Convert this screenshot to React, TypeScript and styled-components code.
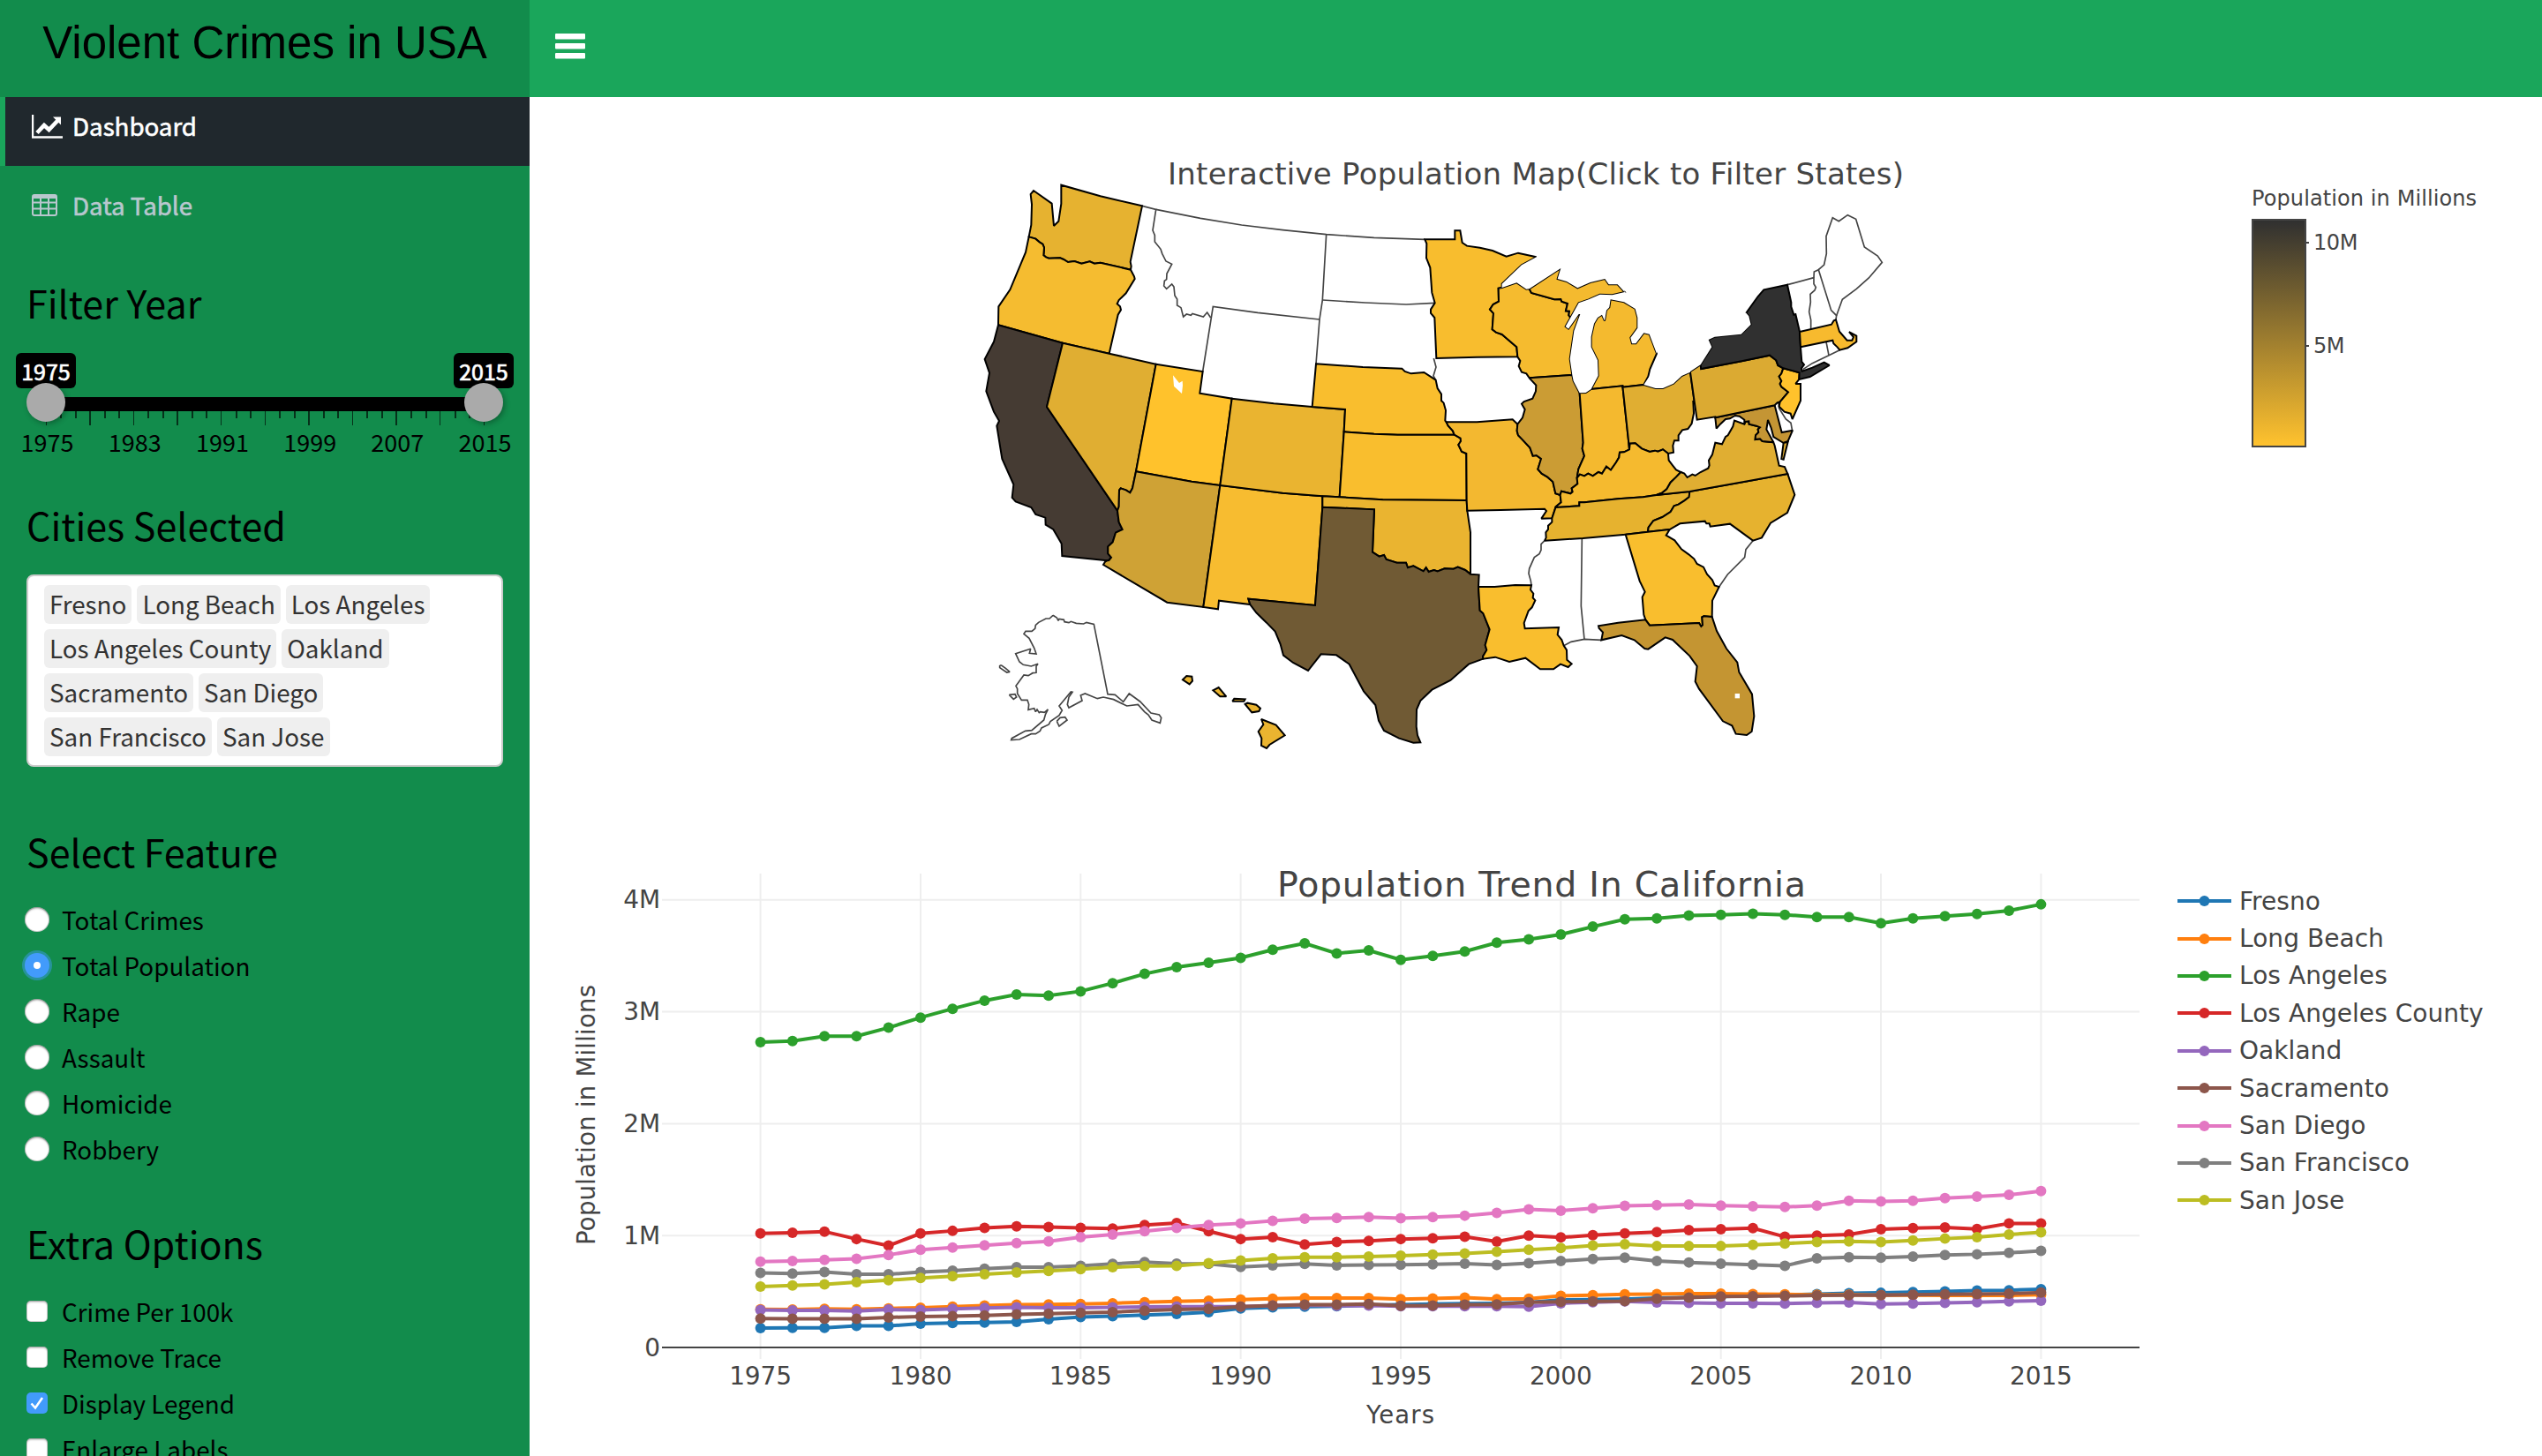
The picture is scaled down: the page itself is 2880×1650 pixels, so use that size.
import React from 'react';
import styled, { createGlobalStyle, css } from 'styled-components';

const sans = `"Noto Sans CJK SC", "Noto Sans", sans-serif`;
const chartFont = `Verdana, "DejaVu Sans", sans-serif`;

const GlobalStyle = createGlobalStyle`
  * { box-sizing: border-box; }
  html, body { margin: 0; padding: 0; height: 1650px; overflow: hidden; background: #fff; }
  h1, h2, ul { margin: 0; padding: 0; font-weight: 400; list-style: none; }
`;

/* ---------- layout ---------- */
const Page = styled.div`
  display: grid;
  grid-template-columns: 600px 1fr;
  grid-template-rows: 110px 1540px;
  width: 2880px;
  height: 1650px;
  overflow: hidden;
  font-family: ${sans};
  color: #000;
`;
const Brand = styled.h1`
  background: #128c4c;
  font-family: "Liberation Sans", Arial, sans-serif;
  font-size: 51px;
  line-height: 97px;
  text-align: center;
  white-space: nowrap;
`;
const TopBar = styled.header`
  background: #1aa65b;
  padding: 33px 26px;
  color: #fff;
`;
const Sidebar = styled.aside`
  background: #128c4c;
  overflow: hidden;
`;
const Main = styled.main`
  display: grid;
  grid-template-rows: 850px 690px;
  background: #fff;
`;
const Panel = styled.section`
  display: grid;
  grid-template-columns: 1840px 1fr;
`;

/* ---------- navigation ---------- */
const Nav = styled.ul`
  display: grid;
  gap: 12px;
`;
const NavItem = styled.li<{ $active?: boolean }>`
  display: flex;
  align-items: flex-start;
  height: 78px;
  padding: 15px 0 0 30px;
  border-left: 6px solid ${p => (p.$active ? '#1aa65b' : 'transparent')};
  background: ${p => (p.$active ? '#20282d' : 'transparent')};
  color: ${p => (p.$active ? '#fff' : '#b8c7ce')};
  font-size: 27.7px;
  line-height: 34px;
  -webkit-text-stroke: 0.6px currentColor;
  svg { width: 36px; height: 28px; margin: 5px 10px 0 0; -webkit-text-stroke: 0; }
`;

/* ---------- sidebar form ---------- */
const Group = styled.section<{ $height: number }>`
  height: ${p => p.$height}px;
`;
const FilterBlock = styled(Group)`
  padding-top: 34px;
`;
const Heading = styled.h2`
  padding-left: 30px;
  font-size: 43px;
  line-height: 60px;
  height: 60px;
`;
const Slider = styled.div`
  position: relative;
  height: 130px;
  margin-top: 28px;
`;
const Track = styled.div`
  position: absolute;
  left: 52px;
  top: 50px;
  width: 496px;
  height: 16px;
  background: #000;
`;
const Bubble = styled.div<{ $x: number }>`
  position: absolute;
  left: ${p => p.$x - 34}px;
  width: 68px;
  height: 40px;
  border-radius: 6px;
  background: #000;
  color: #fff;
  font-size: 25px;
  line-height: 40px;
  text-align: center;
  -webkit-text-stroke: 0.7px #fff;
`;
const Handle = styled.div<{ $x: number }>`
  position: absolute;
  left: ${p => p.$x - 22}px;
  top: 34px;
  width: 44px;
  height: 44px;
  border-radius: 50%;
  background: #aaa;
  box-shadow: 2px 2px 6px rgba(0, 0, 0, 0.3);
`;
const Tick = styled.i<{ $x: number; $major: boolean }>`
  position: absolute;
  left: ${p => p.$x}px;
  top: 66px;
  width: ${p => (p.$major ? 1.4 : 2)}px;
  height: ${p => (p.$major ? 16 : 8)}px;
  background: rgba(0, 0, 0, 0.65);
`;
const TickLabels = styled.div`
  position: absolute;
  left: 4px;
  top: 81px;
  display: grid;
  grid-template-columns: repeat(6, 99.2px);
  font-size: 27px;
  line-height: 40px;
  text-align: center;
`;
const Picker = styled.ul`
  display: flex;
  flex-wrap: wrap;
  align-content: flex-start;
  gap: 6px;
  width: 540px;
  height: 218px;
  margin: 27px 0 0 30px;
  padding: 10px 70px 0 18px;
  border: 2px solid #ccc;
  border-radius: 8px;
  background: #fff;
`;
const Chip = styled.li`
  height: 44px;
  padding: 0 6px;
  border-radius: 6px;
  background: #efefef;
  color: #333;
  font-size: 27.8px;
  line-height: 43px;
  white-space: nowrap;
`;
const Options = styled.div`
  padding: 22px 0 0 28px;
`;
const Option = styled.label`
  display: flex;
  align-items: center;
  gap: 14px;
  height: 52px;
  font-size: 27.8px;
  line-height: 52px;
`;
const mark = css`
  display: grid;
  place-items: center;
  flex: none;
`;
const Radio = styled.span<{ $on?: boolean }>`
  ${mark}
  width: 28px;
  height: 28px;
  border-radius: 50%;
  background: ${p => (p.$on ? '#429bfb' : '#fff')};
  box-shadow: ${p => (p.$on ? '0 0 0 3px rgba(66,155,251,.45)' : 'inset 0 2px 2px rgba(0,0,0,.22), inset 0 0 0 1px rgba(0,0,0,.2)')};
  &::after {
    content: '';
    width: 8px;
    height: 8px;
    border-radius: 50%;
    background: #fff;
  }
`;
const Check = styled.span<{ $on?: boolean }>`
  ${mark}
  width: 24px;
  height: 24px;
  margin: 0 2px;
  border-radius: 5px;
  background: ${p => (p.$on ? '#429bfb' : '#fff')};
  box-shadow: ${p => (p.$on ? 'none' : 'inset 0 2px 2px rgba(0,0,0,.2), inset 0 0 0 1px rgba(0,0,0,.18)')};
`;

/* ---------- charts ---------- */
const Chart = styled.svg`
  display: block;
  font-family: ${chartFont};
  fill: #444;
`;
const ColorScale = styled.div`
  padding: 101px 0 0 111px;
  font-family: ${chartFont};
  color: #444;
`;
const ScaleTitle = styled.div`
  font-size: 24px;
  letter-spacing: 0.1px;
  line-height: 28px;
  height: 37px;
  white-space: nowrap;
`;
const ScaleBody = styled.div`
  display: flex;
`;
const Ramp = styled.div`
  width: 62px;
  height: 259px;
  border: 2px solid #444;
  background: linear-gradient(#303030, #ffc22e);
`;
const ScaleTicks = styled.div`
  display: grid;
  grid-auto-rows: 117px;
  padding-top: 13px;
`;
const ScaleTick = styled.div`
  display: flex;
  align-items: center;
  gap: 5px;
  height: 28px;
  font-size: 24px;
  letter-spacing: -0.4px;
  &::before { content: ''; width: 3px; height: 2px; background: #444; }
`;
const Legend = styled.ul`
  padding: 40px 0 0 27px;
  font-family: ${chartFont};
  color: #444;
`;
const LegendItem = styled.li`
  display: flex;
  align-items: center;
  gap: 9px;
  height: 42.4px;
  font-size: 28px;
  letter-spacing: 0.05px;
  white-space: nowrap;
`;

/* ---------- map topology ----------
   Borders are stored once as arcs on a sheet grid; each letter switches the
   sheet the following points are measured on. */
const sheets: Record<string, [number, number]> = {
  A: [0, 0], B: [0, 870], C: [1200, 0], D: [1200, 870], E: [2220, 60], F: [2340, 840],
};
type Pt = [number, number];
function trace(src: string): Pt[] {
  let o: [number, number] = [0, 0];
  const out: Pt[] = [];
  src.trim().split(/\s+/).forEach(t => {
    if (sheets[t]) { o = sheets[t]; return; }
    const [x, y] = t.split(',').map(Number);
    out.push([x + o[0], y + o[1]]);
  });
  return out;
}
const arcs: Record<string, string> = {
  waN: 'A 197,325 205,285 207,215 203,180 213,168 275,212 282,288 298,272 307,213 307,149 440,187 582,220',
  waE: 'A 582,220 542,410 545,425 543,437',
  orwa: 'A 197,325 220,332 233,343 244,350 249,362 247,388 255,394 265,398 303,397 315,402 330,411 352,408 376,416 404,409 420,416 440,413 543,437',
  orW: 'A 197,325 186,378 133,505 94,562 93,625',
  caor: 'A 93,625 312,686',
  nvor: 'A 312,686 470,722',
  orE: 'A 470,722 500,590 510,573 507,562 497,553 503,540 527,517 557,468 555,460 543,437',
  caW: 'A 93,625 78,682 47,741 63,788 52,850 78,920 96,951 88,968 B 106,210 145,297 140,342 152,355 205,375 220,399 253,410 254,434 280,450 308,498 310,540 463,556',
  caaz: 'B 463,556 469,555 477,545 466,532 466,508 482,493 492,461 515,450 503,425 498,386',
  canv: 'B 498,386 258,33 A 312,686',
  nvid: 'A 470,722 629,758', utid: 'A 629,758 788,783', utwy: 'A 788,783 778,857 887,875',
  nvut: 'A 629,758 B 561,253',
  nvaz: 'B 561,253 549,310 541,325 527,316 509,310 504,317 503,372 498,386',
  azut: 'B 561,253 750,287 847,300', utco: 'A 887,875 B 847,300', aznm: 'B 847,300 790,714',
  azS: 'B 790,714 667,698 450,570 456,560 463,556',
  nmco: 'B 847,300 1060,326 1195,337', nmok: 'B 1195,337 1195,374', okco: 'B 1195,337 1253,340',
  coks: 'B 1253,340 1268,118', cone: 'B 1268,118 A 1272,912 1160,903', cowy: 'A 887,875 1030,892 1160,903',
  wyne: 'A 1160,903 1173,757',
  nmtx: 'B 1195,374 1170,708 943,686 949,705', nmS: 'B 949,705 843,692 840,721 790,714',
  txok: 'B 1195,374 1371,382 1365,527 1388,542 1404,537 1412,552 1448,563 1479,563 1485,580 D 304,574 338,592 347,580 356,594 374,588 386,592 410,583 440,584 455,578 480,588 498,602',
  txar: 'D 498,602 527,604 525,645', arla: 'D 525,645 580,645 650,639 705,640',
  txla: 'D 525,645 530,725 541,735 563,790 548,843 553,860 540,882 541,890',
  txS: 'D 541,890 492,908 430,963 367,995 328,1032 315,1062 314,1120 318,1150 328,1174 304,1175 255,1160 204,1134 186,1100 175,1047 135,1000 112,957 86,908 42,877 B 1190,874 1146,930 1095,903 1062,878 1052,840 1034,797 1005,767 970,733 949,705',
  neks: 'B 1268,118 C 170,995 250,998 443,998',
  ksmo: 'D 443,128 464,140 465,150 457,162 468,185 484,192 485,351',
  okks: 'B 1253,340 D 200,349 485,351', okmo: 'D 485,351 487,386', moar: 'D 487,386 600,384 750,380 756,387 739,413 775,412',
  okar: 'D 487,386 498,460 498,602', motn: 'D 775,412 788,373',
  artn: 'D 775,412 775,425 762,437 762,450 754,460 755,478 750,488',
  arms: 'D 750,488 738,500 738,520 732,533 715,545 698,583 696,600 703,625 705,640',
  msla: 'D 705,640 702,655 712,668 710,682 718,691 707,715 695,727 680,768 683,787 798,783 794,808 808,825 815,845',
  laS: 'D 815,845 825,860 826,893 842,907 830,918 804,908 780,925 735,925 685,887 630,900 582,884 541,890',
  neN: 'A 1173,757 C 132,768 265,773 275,783 296,790 340,786 365,802 380,812',
  neia: 'C 380,812 386,840 399,860 399,882 407,890 414,915 412,950 416,955',
  iamo: 'C 416,955 520,955 641,946 658,962', nemo: 'C 416,955 422,967 438,985 443,998',
  sdia: 'C 380,812 372,798 381,768 373,738', iamn: 'C 382,738 520,734 658,733',
  wiia: 'C 658,733 667,747 662,765 672,785 688,790 698,805',
  iail: 'C 698,805 721,830 720,850 709,875 680,885 672,893 683,912 675,940 658,962',
  moil: 'D 658,92 656,115 660,130 675,145 700,172 710,200 722,198 738,210 727,245 740,260 760,272 778,288 787,328 803,333',
  moky: 'D 803,333 806,358 788,373',
  kytn: 'D 788,375 868,370 868,358 885,358 1000,346 1085,340 1130,333',
  ilky: 'D 803,333 807,320 838,328 845,322 842,310 862,295 860,275',
  ilin: 'D 860,275 865,245 885,200 878,175 881,155 C 869,856',
  inky: 'D 860,275 870,263 885,268 898,260 914,268 933,255 945,260 960,236 975,248 993,222 1003,205 1005,188 1020,187 1038,178',
  inoh: 'D 1038,178 1036,157 C 1015,832',
  ohky: 'D 1038,178 1040,158 1058,157 1080,175 1107,186 1125,182 1135,185 1152,178 1170,192',
  kywv: 'D 1170,192 1172,215 1185,232 1197,247 1213,255',
  kyva: 'D 1213,255 1197,272 1178,290 1165,313 1150,325 1130,333',
  ohwv: 'D 1170,192 1188,188 1186,165 1191,148 1205,148 1205,130 1218,112 1237,108 1250,90 1257,55 1255,15 1259,15',
  ohpa: 'C 1259,885 1245,785', pawv: 'C 1259,885 1268,947 1330,937',
  paS: 'F 190,100 392,58', pade: 'E 512,838 520,830',
  panj: 'E 520,830 530,826 558,793 535,775 530,765 535,755 527,740 535,730 541,712',
  pany: 'E 541,712 523,702 517,685 495,668 400,688 262,714 260,700', paN: 'E 260,700 225,723',
  nyW: 'E 260,700 298,640 287,615 308,605 398,596 431,563 424,535 415,524',
  nyN: 'E 415,524 455,468 475,445 555,428',
  nyvt: 'E 555,428 568,488 568,503 577,530 583,528 597,588', nyma: 'E 597,588 600,640',
  nyS: 'E 600,640 604,690 612,700 603,712 605,722 640,710 680,692 698,702 632,741 595,750 596,727',
  nynj: 'E 596,727 541,712',
  njE: 'E 596,727 595,750 583,765 600,765 600,822 572,885 566,866 545,860 527,842 530,826',
  mdde: 'F 392,58 416,150 453,143',
  mdE: 'F 453,143 437,180 422,186 388,165 380,135 369,108 364,140 388,184',
  mdva: 'F 388,184 350,180 342,172 326,174 327,160 337,150 335,140 342,133 330,128 305,122 304,112 292,114 289,122',
  mdwv: 'F 289,122 289,107 272,95 257,93 240,103 225,105 207,122 194,137 190,100',
  vawv: 'F 73,285 85,290 95,303 112,293 122,297 140,285 166,272 170,262 168,245 180,225 190,185 213,190 225,165 233,160 250,130 255,110 289,122',
  vaE: 'F 388,184 392,195 407,263 426,267 436,291',
  vatn: 'D 1130,333 1243,321', vanc: 'D 1243,321 F 300,316 436,291',
  tnnc: 'D 1243,321 1241,340 1225,352 1205,365 1190,370 1178,390 1150,408 1120,420 1103,443 1101,458',
  tnms: 'D 750,488 880,480', tnal: 'D 880,480 1025,467', tnga: 'D 1025,467 1101,458', ncga: 'D 1101,458 1175,450',
  gasc: 'D 1175,450 1163,470 1192,487 1215,517 1240,535 1258,550 1268,567 1290,578 1302,602 1320,622 1328,640 1343,645',
  ncsc: 'D 1175,450 1210,430 1295,422 1300,430 1310,430 1313,440 1380,431 1458,488',
  ncE: 'F 436,291 460,362 435,423 378,458 348,508 318,518',
  gaE: 'D 1343,645 1320,692 1319,747',
  gafl: 'D 1319,747 1291,745 1285,748 1287,775 1282,780 1275,768 1107,776 1093,757',
  gaal: 'D 1025,467 1073,625 1091,662 1082,680 1087,740 1093,757',
  alfl: 'D 1093,757 1000,767 933,778 935,786 948,800 943,826',
  flS: 'D 943,826 1012,810 1055,826 1090,855 1102,857 1160,817 1185,825 1243,880 1268,915 1262,967 1275,992 1356,1102 1387,1117 1400,1145 1437,1149 1454,1137 1462,1085 1455,1010 1411,935 1405,902 1368,855 1335,795 1319,747',
  scE: 'D 1458,488 1434,518 1430,545 1372,603 1343,645',
  msal: 'D 877,483 874,710 885,823', msS: 'D 815,845 840,832 885,823 943,826',
  ohN: 'C 1087,828 1127,840 1152,840 1188,824 1216,798 1245,785',
  ohmi: 'C 1015,836 1087,828', inmi: 'C 908,843 1015,832', inN: 'C 869,856 890,855 908,843',
  ilE: 'C 869,856 848,815 844,795', ilwi: 'C 698,805 844,795',
  wiE: 'C 844,795 836,740 850,645 871,588 866,588 831,638 821,630 838,600',
  wimi: 'C 838,600 832,592 834,578 822,577 828,552 808,545 805,537 783,538 705,516 698,502',
  wiN: 'C 593,500 605,498 655,481 688,503 698,502',
  mnwi: 'C 593,500 594,545 575,555 564,572 576,585 572,640 585,650 605,657 620,670 655,700 658,733',
  mnE: 'C 593,500 605,497 605,485 672,421 722,394',
  mnN: 'C 722,394 660,380 620,392 573,372 530,362 486,356 470,345 463,304 445,304 445,334 343,334',
  mnW: 'C 343,334 349,348 348,397 361,430 367,515 377,550 363,572 363,585 376,600 382,738',
  upN: 'C 698,502 805,432 794,468 825,477 862,499 905,480 955,468 968,487 998,487 1022,513',
  upS: 'C 1022,513 980,523 938,521 900,538 866,550 838,600',
  lpW: 'C 908,843 932,797 930,745 908,700 908,665 918,620 930,600 945,590 954,611 960,575 970,565 974,538',
  lpE: 'C 974,538 1020,547 1058,570 1066,600 1066,635 1042,668 1047,688 1060,688 1087,652 1106,656 1131,722',
  lpS: 'C 1131,722 1108,775 1102,800 1087,828',
  maN: 'E 597,588 705,563 713,550 720,547',
  maE: 'E 720,547 732,587 758,617 775,617 780,606 765,588 790,602 790,622 760,643 733,650',
  maS: 'E 733,650 725,640 712,628 709,617 600,640',
  huron: 'C 1131,722 1170,600 1022,513',
  superior: 'C 1022,513 1020,420 722,394',
  erie: 'C 1434,583 1170,650 1160,720 1087,828',
};
const ring = (names: string) => {
  const pts: Pt[] = [];
  names.split(' ').forEach(n => {
    const back = n[0] === '-';
    const seg = trace(arcs[back ? n.slice(1) : n]);
    pts.push(...(back ? seg.reverse() : seg));
  });
  return 'M' + pts.map(p => p.join(' ')).join('L') + 'Z';
};
const line = (src: string) => 'M' + trace(src).map(p => p.join(' ')).join('L');

const states: [string, string][] = [
  ['#e6b230', 'waN waE -orwa'],
  ['#f5bc30', 'orwa -orE -nvor -caor -orW'],
  ['#453b33', 'caW caaz canv -caor'],
  ['#e0ae32', 'nvor nvid nvut nvaz canv'],
  ['#ffc22c', 'utid utwy utco -azut -nvut'],
  ['#cfa235', 'azut aznm azS caaz -nvaz'],
  ['#f7bc30', 'nmco nmok nmtx nmS -aznm'],
  ['#eab430', 'cowy -cone -coks -okco -nmco -utco'],
  ['#f9be2e', 'neN neia nemo -neks cone wyne'],
  ['#f9be2e', 'neks ksmo -okks coks'],
  ['#eab430', 'okco okks okmo okar -txok -nmok'],
  ['#705a34', 'txok txar txla txS -nmtx'],
  ['#f9be2e', 'arla msla laS -txla'],
  ['#f3b830', 'iamo moil moky -motn -moar -okmo -ksmo -nemo'],
  ['#f8bd2e', '-mnN -mnE mnwi -iamn -mnW'],
  ['#f5bb2f', 'wiN -wimi -wiE -ilwi -wiia -mnwi'],
  ['#f4ba2f', 'upN upS wimi'],
  ['#f4ba2f', 'lpW lpE lpS -ohmi -inmi'],
  ['#cb9c34', 'ilwi -ilE -ilin -ilky -moil -iail'],
  ['#f4b92f', 'inN inmi -inoh -inky ilin'],
  ['#e0ae32', 'ohmi ohN -ohpa -ohwv -ohky inoh'],
  ['#f5ba2f', 'inky ohky kywv kyva -kytn -moky ilky'],
  ['#e6b22f', 'kytn vatn tnnc -tnga -tnal -tnms -artn motn'],
  ['#e6b22f', 'vanc ncE -ncsc -ncga -tnnc'],
  ['#e0ae32', 'vawv -mdva vaE -vanc -vatn -kyva'],
  ['#c49534', 'paS mdde mdE mdva mdwv'],
  ['#dbaa32', '-paN -pany -panj -pade -paS -pawv ohpa'],
  ['#ffc22c', '-nynj njE panj'],
  ['#303030', 'nyW nyN nyvt nyma nyS nynj pany'],
  ['#f7ba2e', 'maN maE maS -nyma'],
  ['#f9be2e', 'tnga ncga gasc gaE gafl -gaal'],
  ['#c49532', '-gafl -flS -alfl'],
];
const plainBorders = [
  'A 582,220 629,232 618,303 625,320 625,342 645,367 650,382 663,408 683,418 666,450 665,470 658,475 656,492 665,502 683,486 690,495 693,525 701,537 701,558 714,566 722,597 733,588 748,592 753,586 790,597 803,582 815,600',
  'A 629,232 780,262 920,285 1060,302 1208,317 1370,328 C 343,334',
  'A 1208,317 1195,540 1185,606 1173,757',
  'A 1195,540 1340,549 1480,555 C 377,550',
  'A 1185,606 975,583 823,562 788,783',
  arcs.sdia, arcs.arms, arcs.msal, arcs.msS, arcs.scE,
  'F 405,50 407,68 430,105 447,118 452,145',
  'E 555,428 645,404 645,425 652,437 648,447 633,460 634,487 629,520 635,548 635,578',
  'E 645,404 646,384 661,377 704,515 722,533 720,547',
  'E 661,377 680,360 688,322 687,263 709,200 730,212 760,191 788,205 817,300 862,330 877,352 832,405 790,442 742,478 722,533',
  'E 687,622 696,668', 'E 608,716 640,695 696,668 733,650',
  'B 279,742 292,750 297,760 300,754 316,757 318,764 333,767 340,763 358,769 383,771 393,766 418,772 465,1010 490,1012 518,1036 538,1008 575,1035 612,1074 640,1080 647,1090 643,1108 615,1098 603,1080 590,1070 568,1045 530,1050 485,1028 450,1020 430,1025 388,1008 373,1014 378,1032 333,1056 328,1045 333,1020 345,1003 340,1002 300,1050 310,1065 300,1082 270,1103 265,1113 240,1125 235,1135 220,1145 205,1145 165,1164 137,1166 139,1160 185,1135 207,1133 248,1098 253,1080 262,1062 250,1072 236,1070 232,1073 225,1062 220,1070 215,1058 195,1063 197,1045 192,1030 172,1030 158,1008 158,992 153,982 180,945 195,947 210,938 222,937 222,915 228,907 205,915 178,910 165,900 152,872 203,856 199,871 222,873 215,853 198,820 180,805 186,796 207,796 218,787 220,775 230,766 255,753 267,753 279,742',
  'B 98,912 104,912 118,922 132,934 122,936 98,920 98,912',
  'B 130,1012 150,1010 155,1020 145,1027 130,1012',
  'B 292,1102 303,1090 320,1088 327,1098 300,1119 292,1102',
];
const islands = [
  'B 720,961 733,948 751,950 753,965 743,976',
  'B 823,997 842,987 868,1018 847,1018',
  'B 895,1025 932,1027 928,1034 889,1034',
  'B 932,1044 940,1040 970,1046 984,1058 979,1068 955,1072',
  'B 987,1095 1037,1115 1067,1150 1015,1182 1005,1194 987,1185 988,1160 977,1137 994,1113',
];
const lakes = [
  'wiE -upS -superior -mnE',
  'ohN -paN nyW erie',
];
lakes[0] = 'wiE -upS -huron -lpE -lpW -inN ilE';
lakes.push('wiN upN superior -mnE');

function PopulationMap() {
  return (
    <Chart width={1840} height={850} viewBox="600 110 1840 850">
      <g transform="translate(1100 160) scale(0.33333)" strokeLinejoin="miter" strokeMiterlimit={2}>
        <g fill="none" stroke="#444" strokeWidth={5}>
          {plainBorders.map(b => <path key={b} d={line(b)} />)}
        </g>
        <g stroke="#000" strokeWidth={6}>
          {states.map(([c, r]) => <path key={r} d={ring(r)} fill={c} />)}
          <path d={line('F 437,182 422,242 415,240 422,186') + 'Z'} fill="#e0ae32" />
          {islands.map(s => <path key={s} d={line(s) + 'Z'} fill="#eab430" />)}
        </g>
        <g fill="#fff">
          {lakes.map(l => <path key={l} d={ring(l)} />)}
          <path d={line('A 687,796 708,822 719,815 720,830 717,858 690,833') + 'Z'} />
          <rect x={2597} y={1878} width={16} height={16} />
        </g>
      </g>
      <text x={1323} y={209} fontSize={34} textLength={834}>Interactive Population Map(Click to Filter States)</text>
    </Chart>
  );
}

/* ---------- trend data, thousands of people, 1975 to 2015 ---------- */
const series: { name: string; color: string; data: number[] }[] = [
  { name: 'Fresno', color: '#1f77b4', data: [173,176,176,193,193,212,219,222,229,252,272,279,289,299,315,349,358,365,368,378,382,388,392,395,402,425,428,432,442,448,455,461,468,478,485,488,495,501,508,511,521] },
  { name: 'Long Beach', color: '#ff7f0e', data: [342,339,345,342,349,355,365,375,382,385,388,395,405,412,418,428,435,442,442,442,432,438,445,432,435,461,468,475,478,481,481,478,475,471,471,468,468,465,465,465,471] },
  { name: 'Los Angeles', color: '#2ca02c', data: [2729,2739,2782,2782,2858,2948,3027,3100,3154,3144,3183,3256,3339,3399,3439,3482,3555,3612,3522,3548,3465,3499,3539,3618,3648,3691,3761,3827,3834,3861,3867,3877,3867,3847,3847,3791,3834,3854,3874,3904,3960] },
  { name: 'Los Angeles County', color: '#d62728', data: [1019,1026,1036,969,910,1019,1042,1069,1082,1076,1069,1062,1095,1112,1039,969,986,920,943,953,969,976,989,946,999,983,1003,1019,1032,1049,1056,1066,989,999,1009,1056,1066,1072,1059,1109,1109] },
  { name: 'Oakland', color: '#9467bd', data: [335,332,332,325,339,335,345,352,358,355,355,358,362,365,365,365,375,378,372,375,368,368,368,368,365,395,405,412,402,398,395,395,392,398,402,388,392,398,405,412,418] },
  { name: 'Sacramento', color: '#8c564b', data: [259,256,256,256,269,276,279,285,295,302,309,315,329,339,345,365,375,382,382,388,372,375,382,385,405,408,412,415,435,445,455,458,461,465,468,468,471,475,478,481,491] },
  { name: 'San Diego', color: '#e377c2', data: [767,773,783,793,827,873,893,913,933,949,986,1009,1039,1069,1095,1109,1132,1152,1158,1165,1155,1165,1178,1202,1235,1222,1245,1265,1271,1278,1268,1261,1255,1268,1311,1305,1311,1334,1348,1364,1397] },
  { name: 'San Francisco', color: '#7f7f7f', data: [667,661,674,654,654,674,687,704,717,717,730,747,763,750,747,720,734,747,734,737,740,744,750,737,754,773,790,803,773,760,750,740,730,797,807,803,813,827,833,846,863] },
  { name: 'San Jose', color: '#bcbd22', data: [544,554,564,584,601,621,637,654,671,684,700,717,727,730,754,777,797,807,807,813,820,830,840,856,873,890,910,923,906,906,906,916,929,943,949,943,956,973,986,1009,1029] },
];
const px = (i: number) => 861.6 + i * 36.27;
const py = (v: number) => 1527 - v * 0.1268;
const fiveYears = [0, 5, 10, 15, 20, 25, 30, 35, 40];

function TrendChart() {
  return (
    <Chart width={1840} height={690} viewBox="600 960 1840 690">
      <g stroke="#eee" strokeWidth={2}>
        {fiveYears.map(i => <line key={i} x1={px(i)} x2={px(i)} y1={990} y2={1540} />)}
        {[1000, 2000, 3000, 4000].map(v => <line key={v} x1={750} x2={2424} y1={py(v)} y2={py(v)} />)}
      </g>
      <line x1={750} x2={2424} y1={1527} y2={1527} stroke="#444" strokeWidth={2} />
      {series.map(s => (
        <g key={s.name} fill={s.color}>
          <polyline fill="none" stroke={s.color} strokeWidth={4} points={s.data.map((v, i) => `${px(i)},${py(v)}`).join(' ')} />
          {s.data.map((v, i) => <circle key={i} cx={px(i)} cy={py(v)} r={6} />)}
        </g>
      ))}
      <text x={1447} y={1016} fontSize={39.5} textLength={599}>Population Trend In California</text>
      <g fontSize={28} letterSpacing={-0.1}>
        {[0, 1, 2, 3, 4].map(v => <text key={v} x={748} y={py(v * 1000) + 9.5} textAnchor="end">{v ? `${v}M` : '0'}</text>)}
        {fiveYears.map(i => <text key={i} x={px(i)} y={1569} textAnchor="middle">{1975 + i}</text>)}
      </g>
      <text x={1548} y={1613} fontSize={27.5} textLength={77}>Years</text>
      <text transform="translate(674 1411) rotate(-90)" fontSize={27.5} textLength={295}>Population in Millions</text>
    </Chart>
  );
}

const ticks = Array.from({ length: 31 }, (_, i) => i);
function FilterYear() {
  return (
    <FilterBlock $height={286}>
      <Heading>Filter Year</Heading>
      <Slider>
        {ticks.map(i => <Tick key={i} $x={51.5 + i * 16.54} $major={i % 3 === 0} />)}
        <Track />
        <Bubble $x={52}>1975</Bubble>
        <Bubble $x={548}>2015</Bubble>
        <Handle $x={52} />
        <Handle $x={548} />
        <TickLabels>
          {[1975, 1983, 1991, 1999, 2007, 2015].map(y => <span key={y}>{y}</span>)}
        </TickLabels>
      </Slider>
    </FilterBlock>
  );
}

const cities = series.map(s => s.name);
const features = ['Total Crimes', 'Total Population', 'Rape', 'Assault', 'Homicide', 'Robbery'];
const extras = ['Crime Per 100k', 'Remove Trace', 'Display Legend', 'Enlarge Labels'];

export default function App() {
  return (
    <Page>
      <GlobalStyle />
      <Brand>Violent Crimes in USA</Brand>
      <TopBar>
        <svg width="42" height="38" viewBox="0 0 42 38" fill="#fff">
          <rect x="3" y="5" width="34" height="6.5" rx="1" />
          <rect x="3" y="16" width="34" height="6.5" rx="1" />
          <rect x="3" y="27" width="34" height="6.5" rx="1" />
        </svg>
      </TopBar>
      <Sidebar>
        <Nav>
          <NavItem $active>
            <svg viewBox="0 0 36 28" fill="none" stroke="#fff">
              <path d="M1 0V25.5H35" strokeWidth="2.4" />
              <path d="M6 20.5L14 12L19.5 17L29.5 6.5" strokeWidth="4.6" />
              <path d="M24 2.5H33V11.5Z" fill="#fff" stroke="none" />
            </svg>
            Dashboard
          </NavItem>
          <NavItem>
            <svg viewBox="0 0 36 28" fill="none" stroke="#b8c7ce" strokeWidth="2">
              <rect x="1" y="1" width="27" height="23" rx="2" />
              <path d="M1 3.2H28" strokeWidth="3.6" />
              <path d="M1 9.5H28M1 16.5H28M10 3V24M19 3V24" />
            </svg>
            Data Table
          </NavItem>
        </Nav>
        <FilterYear />
        <Group $height={370}>
          <Heading>Cities Selected</Heading>
          <Picker>{cities.map(c => <Chip key={c}>{c}</Chip>)}</Picker>
        </Group>
        <Group $height={444}>
          <Heading>Select Feature</Heading>
          <Options>
            {features.map(f => <Option key={f}><Radio $on={f === 'Total Population'} />{f}</Option>)}
          </Options>
        </Group>
        <Group $height={300}>
          <Heading>Extra Options</Heading>
          <Options>
            {extras.map(f => (
              <Option key={f}>
                <Check $on={f === 'Display Legend'}>
                  {f === 'Display Legend' && (
                    <svg width="16" height="16" viewBox="0 0 16 16" fill="none" stroke="#fff" strokeWidth="2.6"><path d="M1.5 8.5L6 13.5L14 2" /></svg>
                  )}
                </Check>
                {f}
              </Option>
            ))}
          </Options>
        </Group>
      </Sidebar>
      <Main>
        <Panel>
          <PopulationMap />
          <ColorScale>
            <ScaleTitle>Population in Millions</ScaleTitle>
            <ScaleBody>
              <Ramp />
              <ScaleTicks>
                <ScaleTick>10M</ScaleTick>
                <ScaleTick>5M</ScaleTick>
              </ScaleTicks>
            </ScaleBody>
          </ColorScale>
        </Panel>
        <Panel>
          <TrendChart />
          <Legend>
            {series.map(s => (
              <LegendItem key={s.name}>
                <svg width="61" height="14" viewBox="0 0 61 14" fill={s.color}>
                  <rect y="5" width="61" height="4" />
                  <circle cx="30.5" cy="7" r="6" />
                </svg>
                {s.name}
              </LegendItem>
            ))}
          </Legend>
        </Panel>
      </Main>
    </Page>
  );
}
